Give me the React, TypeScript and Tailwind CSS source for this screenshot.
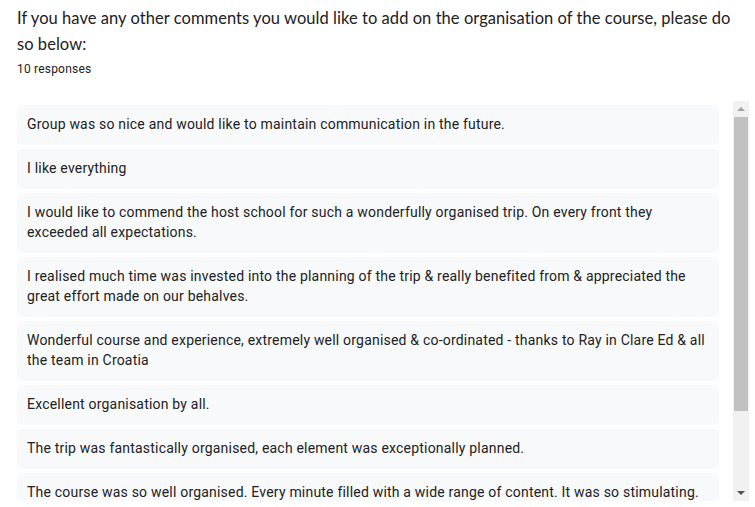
import React from "react";

const responses: string[] = [
  "Group was so nice and would like to maintain communication in the future.",
  "I like everything",
  "I would like to commend the host school for such a wonderfully organised trip. On every front they exceeded all expectations.",
  "I realised much time was invested into the planning of the trip & really benefited from & appreciated the great effort made on our behalves.",
  "Wonderful course and experience, extremely well organised & co-ordinated - thanks to Ray in Clare Ed & all the team in Croatia",
  "Excellent organisation by all.",
  "The trip was fantastically organised, each element was exceptionally planned.",
  "The course was so well organised. Every minute filled with a wide range of content. It was so stimulating.",
  "Very well organised and informative.",
  "Thank you.",
];

export default function App() {
  return (
    <div className="w-[755px] h-[507px] bg-white overflow-hidden relative">
      <div className="pl-[17px] pr-[10px] pt-[5px]">
        <div
          className="text-[16.5px] leading-[26px] text-[#202124] tracking-[0.05px]"
          style={{ fontFamily: 'Lato, "Open Sans", Arial, sans-serif' }}
        >
          <div className="whitespace-nowrap">
            If you have any other comments you would like to add on the organisation of the course, please do
          </div>
          <div className="whitespace-nowrap">so below:</div>
        </div>
        <div
          className="mt-[4px] text-[12px] leading-[16px] text-[#202124] tracking-[0.2px]"
          style={{ fontFamily: "Roboto, Arial, sans-serif" }}
        >
          10 responses
        </div>
      </div>
      <div className="flex mt-[24px] h-[400px]">
        <div className="pl-[17px] w-[719px] overflow-hidden">
          <div className="flex flex-col gap-[4px] pt-[4px]">
            {responses.map((r, i) => (
              <div
                key={i}
                className="bg-[#f8f9fa] rounded-[4px] px-[10px] pt-[9px] pb-[11px] text-[14px] leading-[20px] text-[#202124] tracking-[0.2px]"
                style={{ fontFamily: "Roboto, Arial, sans-serif" }}
              >
                {r}
              </div>
            ))}
          </div>
        </div>
        <div className="ml-[14px] w-[16px] h-[400px] bg-[#f1f1f1] flex flex-col items-center">
          <div className="h-[16px] w-full flex items-center justify-center">
            <div className="w-0 h-0 border-l-[4px] border-r-[4px] border-b-[4px] border-l-transparent border-r-transparent border-b-[#a3a3a3]" />
          </div>
          <div className="w-[14px] h-[294px] bg-[#c1c1c1]" />
          <div className="flex-1" />
          <div className="h-[16px] w-full flex items-center justify-center">
            <div className="w-0 h-0 border-l-[4px] border-r-[4px] border-t-[4px] border-l-transparent border-r-transparent border-t-[#505050]" />
          </div>
        </div>
      </div>
    </div>
  );
}
